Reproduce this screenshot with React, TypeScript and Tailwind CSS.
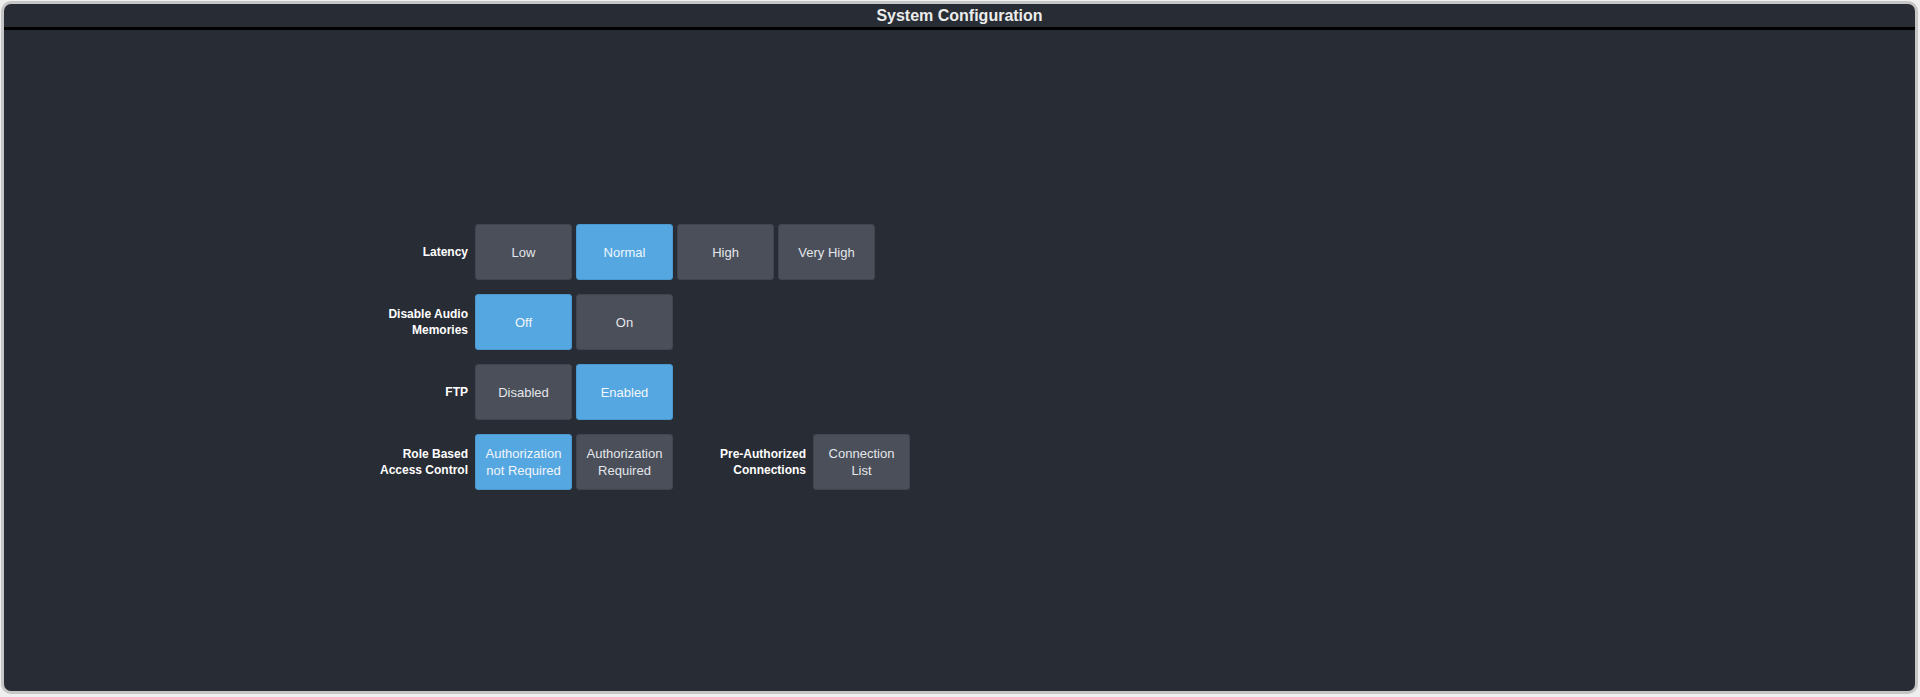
import React from 'react';

type Opt = { label: string; active?: boolean };

const ROWS: { label: string[]; options: Opt[] }[] = [
    { label: ['Latency'], options: [{ label: 'Low' }, { label: 'Normal', active: true }, { label: 'High' }, { label: 'Very High' }] },
    { label: ['Disable Audio', 'Memories'], options: [{ label: 'Off', active: true }, { label: 'On' }] },
    { label: ['FTP'], options: [{ label: 'Disabled' }, { label: 'Enabled', active: true }] },
];

function Btn({ children, active }: { children: React.ReactNode; active?: boolean }) {
    return (
        <button
            className={
                active
                    ? 'w-[97px] h-[56px] rounded-[3px] bg-[#55a7e1] border border-[#4b98cf] text-[13px] leading-[17px] text-[#f2f6fa] flex flex-col items-center justify-center'
                    : 'w-[97px] h-[56px] rounded-[3px] bg-[#4a4f5a] border border-[#40454f] text-[13px] leading-[17px] text-[#e4e6ea] flex flex-col items-center justify-center'
            }
        >
            {children}
        </button>
    );
}

function Label({ lines, width }: { lines: string[]; width: string }) {
    return (
        <div className={`${width} text-right text-[12px] leading-[16px] font-bold text-white`}>
            {lines.map((l) => (
                <div key={l}>{l}</div>
            ))}
        </div>
    );
}

export default function App() {
    return (
        <div
            className="h-[697px] w-[1920px] bg-[#efefef] pt-[1px] pl-[1px] pr-[2px] pb-[3px]"
            style={{ fontFamily: '"Liberation Sans", Arial, sans-serif' }}
        >
            <div className="h-full rounded-[10px] border-[3px] border-[#c6c6c6] bg-[#282c34] overflow-hidden flex flex-col">
                {/* Title bar */}
                <div className="h-[23px] flex items-center justify-center text-[16px] font-bold text-[#ececec]">
                    System Configuration
                </div>
                <div className="h-[3px] bg-black" />

                <div className="mt-[194px] ml-[364px] flex flex-col gap-[14px]">
                    {ROWS.map((row) => (
                        <div key={row.label[0]} className="flex items-center h-[56px]">
                            <Label lines={row.label} width="w-[100px]" />
                            <div className="ml-[7px] flex gap-[4px]">
                                {row.options.map((o) => (
                                    <Btn key={o.label} active={o.active}>
                                        {o.label}
                                    </Btn>
                                ))}
                            </div>
                        </div>
                    ))}

                    <div className="flex items-center h-[56px]">
                        <Label lines={['Role Based', 'Access Control']} width="w-[100px]" />
                        <div className="ml-[7px] flex gap-[4px]">
                            <Btn active>
                                <span>Authorization</span>
                                <span>not Required</span>
                            </Btn>
                            <Btn>
                                <span>Authorization</span>
                                <span>Required</span>
                            </Btn>
                        </div>
                        <Label lines={['Pre-Authorized', 'Connections']} width="w-[133px]" />
                        <div className="ml-[7px]">
                            <Btn>
                                <span>Connection</span>
                                <span>List</span>
                            </Btn>
                        </div>
                    </div>
                </div>
            </div>
        </div>
    );
}
